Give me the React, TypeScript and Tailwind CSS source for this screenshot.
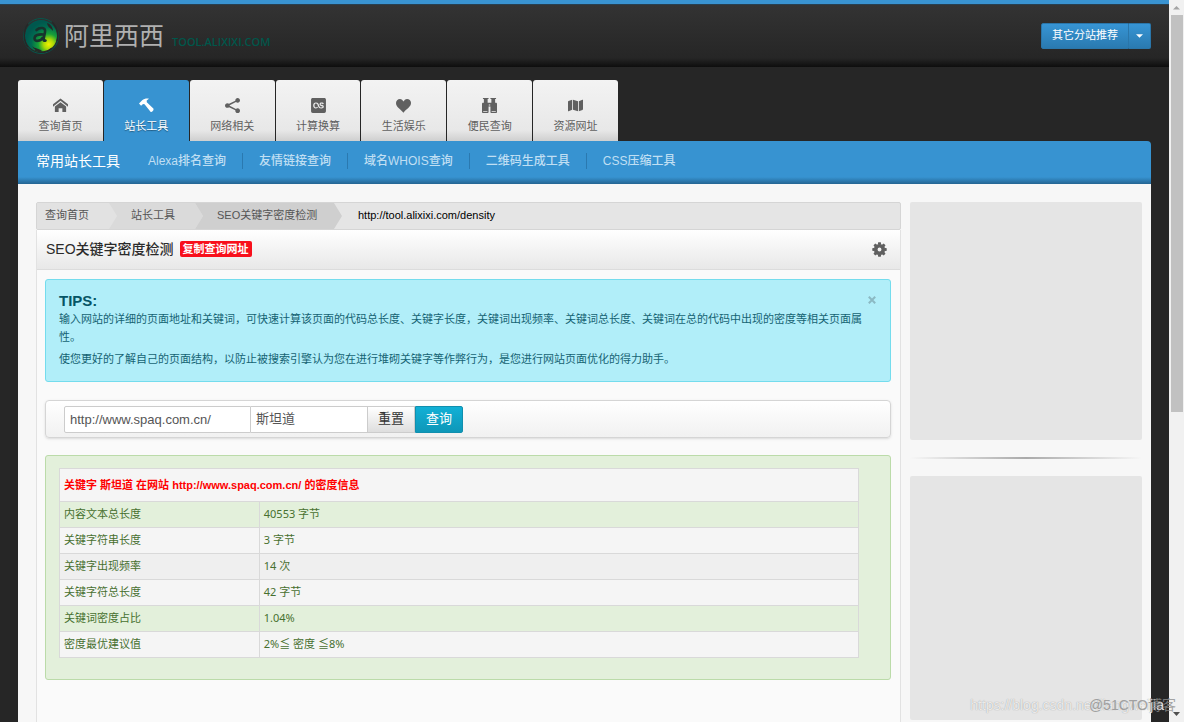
import React from "react";
import { ImHome, ImShare2, ImHeart, ImBinoculars } from "react-icons/im";
import { FaMap, FaLastfmSquare } from "react-icons/fa";

function Hammer() {
  return (
    <svg viewBox="0 0 16 15" width="15" height="15" fill="currentColor" aria-hidden="true">
      <path d="M0 5.4 3.4 2C5.2.3 7.300 0 10.600.2L8.200 2.200 8.300 4.100 15.300 10.800C16.200 12.200 14.200 14.900 12.500 14.400L5.900 6.200 4.300 5.800 2.200 7.700Z" />
    </svg>
  );
}

const teeth = [0, 45, 90, 135, 180, 225, 270, 315];

function Gear() {
  return (
    <svg viewBox="0 0 16 16" width="15" height="15" aria-hidden="true">
      <circle cx="8" cy="8" r="4" fill="none" stroke="currentColor" strokeWidth="3.800" />
      {teeth.map((a) => (
        <path key={a} d="M6.200 3 6.600.3h2.800L9.800 3Z" fill="currentColor" transform={`rotate(${a} 8 8)`} />
      ))}
    </svg>
  );
}

const tabs = [
  { label: "查询首页", icon: <ImHome /> },
  { label: "站长工具", icon: <Hammer />, active: true },
  { label: "网络相关", icon: <ImShare2 /> },
  { label: "计算换算", icon: <FaLastfmSquare className="text-[17px]" /> },
  { label: "生活娱乐", icon: <ImHeart /> },
  { label: "便民查询", icon: <ImBinoculars /> },
  { label: "资源网址", icon: <FaMap /> },
];

const tools = ["Alexa排名查询", "友情链接查询", "域名WHOIS查询", "二维码生成工具", "CSS压缩工具"];

const rows = [
  { name: "内容文本总长度", value: "40553 字节", tone: "bg-[#e3f0db]" },
  { name: "关键字符串长度", value: "3 字节", tone: "bg-[#f5f5f5]" },
  { name: "关键字出现频率", value: "14 次", tone: "bg-[#efefef]" },
  { name: "关键字符总长度", value: "42 字节", tone: "bg-[#f5f5f5]" },
  { name: "关键词密度占比", value: "1.04%", tone: "bg-[#e3f0db]" },
  { name: "密度最优建议值", value: "2%≦ 密度 ≦8%", tone: "bg-[#f5f5f5]" },
];

function Logo() {
  return (
    <a href="#" className="flex items-center">
      <svg viewBox="0 0 38 38" width="38" height="38" aria-hidden="true">
        <defs>
          <radialGradient id="orb" cx="0.74" cy="0.76" r="0.72">
            <stop offset="0" stopColor="#f4f000" />
            <stop offset="0.22" stopColor="#a8d808" />
            <stop offset="0.45" stopColor="#18a038" />
            <stop offset="0.75" stopColor="#006a50" />
            <stop offset="1" stopColor="#00584e" />
          </radialGradient>
        </defs>
        <circle cx="19" cy="19" r="16" fill="url(#orb)" />
        <circle cx="19" cy="19" r="17.500" fill="none" stroke="#07564b" strokeWidth="1" />
        <path d="M6 7C1 13 1 24 6 30M30 5C35 10 37 17 35 24M13 33C18 36 25 36 30 31" fill="none" stroke="#272727" strokeWidth="1.400" />
        <path d="M25 6c4 1 6 5 6 8-2-3-5-3-6-8ZM10 29c3 3 7 2 10 5-4 1-8-1-10-5Z" fill="#272727" />
        <path d="M14.500 13c3-3 9.500-3 8.500 2l-1.500 7.500c0 1.500 1 1.500 2 1M21.500 17.500c-5-.5-9 .5-9 4 0 3.500 6 3 8.500-1" fill="none" stroke="#17322d" strokeWidth="2.600" strokeLinecap="round" />
      </svg>
      <span className="ml-1 text-[25px] leading-8 text-[#b0b0b0]">阿里西西</span>
      <span className="mt-3 ml-2 font-['Open_Sans',sans-serif] text-[11px] leading-4 font-semibold text-[#00574b]">TOOL.ALIXIXI.COM</span>
    </a>
  );
}

function Header() {
  return (
    <header className="flex h-[67px] shrink-0 items-center justify-between border-t-4 border-[#3993d1] bg-[linear-gradient(#1d4b6b_0,#333_1px,#262626_54px,#0d0d0d_63px)] pr-[18px] pl-[22px]">
      <Logo />
      <div className="flex h-[26px] text-[11px] text-white [text-shadow:0_1px_1px_rgba(0,0,0,0.4)]">
        <button className="rounded-l-xs border border-[#2a76aa] bg-linear-to-b from-[#3795d5] to-[#2a7ab0] px-[10px]">其它分站推荐</button>
        <button aria-label="展开" className="flex w-[22px] items-center justify-center rounded-r-xs border border-l-0 border-[#2a76aa] bg-linear-to-b from-[#3795d5] to-[#2a7ab0]">
          <svg viewBox="0 0 8 4" width="7" height="4" fill="currentColor"><path d="M0 0h8L4 4Z" /></svg>
        </button>
      </div>
    </header>
  );
}

function Navigation() {
  return (
    <nav className="shrink-0">
      <ul className="flex w-[600px] gap-px">
        {tabs.map((t) => (
          <li key={t.label} className="flex-1">
            <a
              href="#"
              className={
                "flex h-[61px] flex-col items-center rounded-t-[3px] pt-[17px] text-[11px] leading-4 " +
                (t.active
                  ? "bg-[#3793d1] text-white [text-shadow:0_1px_1px_rgba(0,0,0,0.4)]"
                  : "bg-[linear-gradient(#f3f3f3_0,#e8e8e8_50px,#cfcfcf_61px)] text-[#606060]")
              }
            >
              <span className="flex h-4 items-center text-[15px]">{t.icon}</span>
              <span className="mt-[5px]">{t.label}</span>
            </a>
          </li>
        ))}
      </ul>
      <div className="flex h-[43px] items-center rounded-tr-[4px] bg-[linear-gradient(#3793d1_0,#3793d1_36px,#246592_43px)] pb-1 pl-[18px]">
        <h2 className="mr-3 text-[14px] leading-5 text-white">常用站长工具</h2>
        <ul className="flex items-center divide-x divide-[#2a79b0]">
          {tools.map((t) => (
            <li key={t} className="flex h-4 items-center px-4">
              <a href="#" className="text-[12px] leading-4 font-medium text-[#c0dff3]">{t}</a>
            </li>
          ))}
        </ul>
      </div>
    </nav>
  );
}

function Breadcrumb() {
  return (
    <div className="flex h-[28px] items-stretch overflow-hidden rounded-xs border border-[#d5d5d5] bg-[#e5e5e5] text-[11px] leading-[25px] text-[#555]">
      <a href="#" className="w-[80px] bg-[#e2e2e2] pl-2 [clip-path:polygon(0_0,72px_0,100%_50%,72px_100%,0_100%)]">查询首页</a>
      <a href="#" className="-ml-2 w-[94px] bg-[#dadada] pl-[22px] [clip-path:polygon(0_0,86px_0,100%_50%,86px_100%,0_100%,8px_50%)]">站长工具</a>
      <a href="#" className="-ml-2 w-[147px] bg-[#cfcfcf] pl-[22px] [clip-path:polygon(0_0,139px_0,100%_50%,139px_100%,0_100%,8px_50%)]">SEO关键字密度检测</a>
      <span className="pl-4 text-black">http://tool.alixixi.com/density</span>
    </div>
  );
}

function Tips() {
  return (
    <section className="relative h-[103px] rounded-[3px] border border-[#74dced] bg-[#b1eef9] pt-[12px] pr-[25px] pl-[13px] text-[11px] leading-[18px] text-[#156373]">
      <h3 className="text-[15px] font-bold text-[#065566]">TIPS:</h3>
      <p>输入网站的详细的页面地址和关键词，可快速计算该页面的代码总长度、关键字长度，关键词出现频率、关键词总长度、关键词在总的代码中出现的密度等相关页面属性。</p>
      <p className="mt-1">使您更好的了解自己的页面结构，以防止被搜索引擎认为您在进行堆砌关键字等作弊行为，是您进行网站页面优化的得力助手。</p>
      <button aria-label="关闭" className="absolute top-3 right-[13px] flex h-4 w-[9px] items-center text-[#8bb9c3]">
        <svg viewBox="0 0 8 8" width="8" height="8" stroke="currentColor" strokeWidth="2"><path d="m.8.8 6.400 6.400M7.200.8.8 7.200" /></svg>
      </button>
    </section>
  );
}

function QueryForm() {
  return (
    <form onSubmit={(e) => e.preventDefault()} className="mt-[18px] flex h-[38px] items-center rounded-[4px] border border-[#d5d5d5] bg-linear-to-b from-white to-[#f1f1f1] pl-[18px] text-[13px] text-[#555] shadow-sm">
      <input aria-label="网址" defaultValue="http://www.spaq.com.cn/" className="h-[27px] w-[187px] rounded-l-xs border border-[#ccc] bg-white px-[5px]" />
      <input aria-label="关键字" defaultValue="斯坦道" className="h-[27px] w-[117px] border border-l-0 border-[#ccc] bg-white px-[5px] pb-1" />
      <button type="reset" className="h-[27px] w-[47px] border border-l-0 border-[#ccc] bg-linear-to-b from-white to-[#dedede] text-[#333]">重置</button>
      <button type="submit" className="h-[27px] w-[48px] rounded-r-xs border border-[#118fae] bg-linear-to-b from-[#12b0d6] to-[#0e97b8] text-white">查询</button>
    </form>
  );
}

function Results() {
  return (
    <section className="mt-[17px] h-[225px] rounded-[3px] border border-[#bbdba9] bg-[#e3f0db] pt-3 pr-[31px] pl-[13px]">
      <table className="w-full border-collapse text-left text-[11px] leading-4 text-[#47702f]">
        <thead>
          <tr className="h-[33px]">
            <th colSpan={2} className="border border-[#d9d9d9] bg-[#f5f5f5] px-1 font-bold text-[#f00]">关键字 斯坦道 在网站 http://www.spaq.com.cn/ 的密度信息</th>
          </tr>
        </thead>
        <tbody>
          {rows.map((r) => (
            <tr key={r.name} className={"h-[26px] " + r.tone}>
              <td className="w-1/4 border border-[#d9d9d9] px-1 pb-px">{r.name}</td>
              <td className="border border-[#d9d9d9] px-1 pb-px font-['Noto_Sans','Noto_Sans_CJK_SC',sans-serif]">{r.value}</td>
            </tr>
          ))}
        </tbody>
      </table>
    </section>
  );
}

function Scrollbar() {
  return (
    <div className="flex w-[15px] shrink-0 flex-col items-center bg-[#f1f1f1]">
      <svg viewBox="0 0 15 15" width="15" height="15" className="shrink-0"><path d="M4 9.500h7L7.500 6Z" fill="#a3a3a3" /></svg>
      <div className="h-[55%] w-3 bg-[#c1c1c1]" />
      <svg viewBox="0 0 15 15" width="15" height="15" className="mt-auto shrink-0"><path d="M4 5h7L7.500 9Z" fill="#505050" /></svg>
    </div>
  );
}

export default function App() {
  return (
    <div className="relative flex h-screen overflow-hidden bg-[#262626] font-['Liberation_Sans','Noto_Sans_CJK_SC',sans-serif]">
      <div className="flex min-w-0 flex-1 flex-col">
        <Header />
        <div className="flex min-h-0 flex-1 flex-col px-[18px] pt-[13px]">
          <Navigation />
          <div className="flex min-h-0 flex-1 gap-[9px] bg-[#f7f7f7] pt-[18px] pr-[9px] pl-[18px]">
            <main className="flex min-w-0 flex-1 flex-col">
              <Breadcrumb />
              <div className="flex-1 border-x border-[#e2e2e2] bg-[#fafafa]">
                <div className="flex h-[40px] items-center justify-between border-b border-[#dcdcdc] bg-linear-to-b from-white to-[#e8e8e8] pr-[13px] pb-px pl-[9px]">
                  <div className="flex items-center gap-1.5">
                    <h1 className="text-[14px] leading-5 font-medium text-[#2b2b2b]">SEO关键字密度检测</h1>
                    <button className="h-4 rounded-xs bg-[#f8101c] px-[3px] text-[11px] leading-4 font-bold text-white">复制查询网址</button>
                  </div>
                  <button aria-label="设置" className="text-[#606060]"><Gear /></button>
                </div>
                <div className="pt-[9px] pr-[9px] pl-2">
                  <Tips />
                  <QueryForm />
                  <Results />
                </div>
              </div>
            </main>
            <aside className="w-[232px] shrink-0">
              <div className="h-[238px] rounded-xs bg-[#e5e5e5]" />
              <div className="my-[17px] h-[2px] bg-linear-to-r from-transparent via-[#aaa] to-transparent" />
              <div className="h-[244px] rounded-xs bg-[#e5e5e5]" />
            </aside>
          </div>
        </div>
      </div>
      <Scrollbar />
      <span className="absolute right-[20px] bottom-[7px] text-[14px] leading-5 text-white/80 [text-shadow:0_0_1px_#888]">https://blog.csdn.net/liangweijia</span>
      <span className="absolute right-[8px] bottom-[7px] text-[14px] leading-5 text-[#8e8e8e]/80">@51CTO博客</span>
    </div>
  );
}
